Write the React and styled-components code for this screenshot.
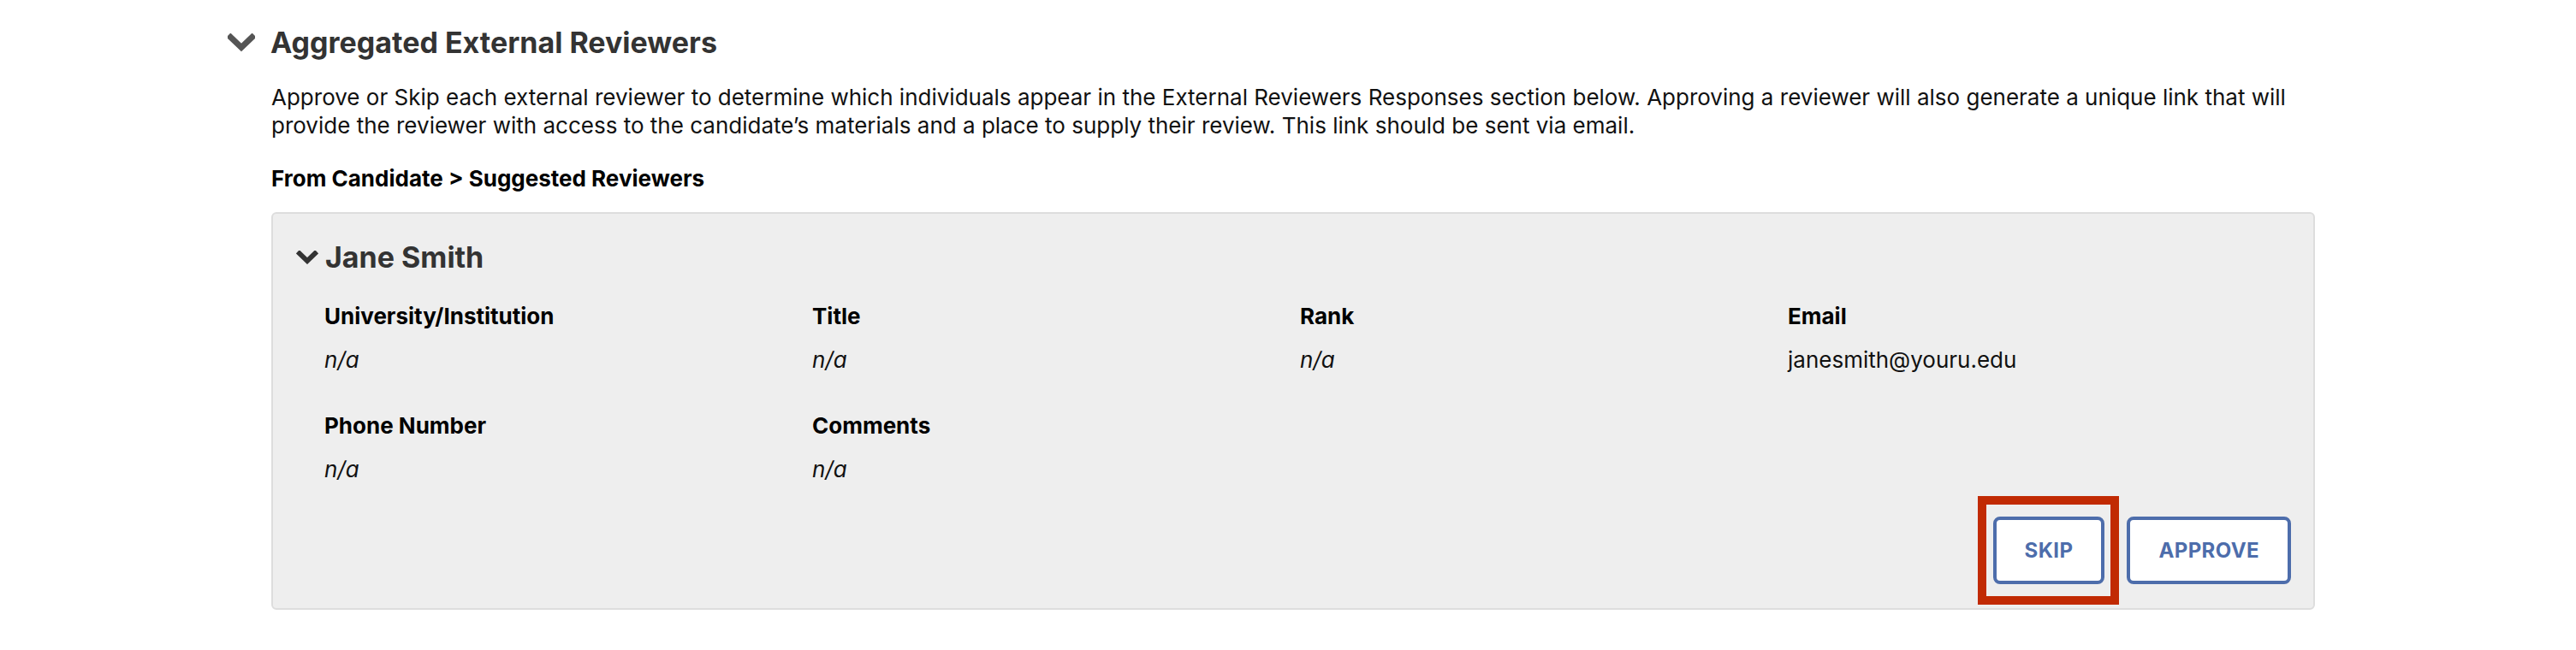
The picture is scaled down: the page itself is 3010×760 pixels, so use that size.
import React from "react";
import styled, { createGlobalStyle } from "styled-components";

const GlobalStyle = createGlobalStyle`
  body {
    margin: 0;
    background: #ffffff;
    font-family: Inter, "Liberation Sans", sans-serif;
    color: #111111;
  }
`;

const fields = [
  { label: "University/Institution", value: "n/a", empty: true },
  { label: "Title", value: "n/a", empty: true },
  { label: "Rank", value: "n/a", empty: true },
  { label: "Email", value: "janesmith@youru.edu" },
  { label: "Phone Number", value: "n/a", empty: true },
  { label: "Comments", value: "n/a", empty: true },
];

function Chevron({ size }) {
  const big = size === "big";
  return (
    <ChevronIcon
      width={big ? 32 : 26}
      height={big ? 22 : 16}
      viewBox="0 0 32 22"
      $big={big}
    >
      <path d="M3.5 4.5 L16 16.5 L28.5 4.5" />
    </ChevronIcon>
  );
}

export default function App() {
  return (
    <>
      <GlobalStyle />
      <Section>
        <SectionHeader>
          <Chevron size="big" />
          <SectionTitle>Aggregated External Reviewers</SectionTitle>
        </SectionHeader>

        <SectionBody>
          <Intro>
            Approve or Skip each external reviewer to determine which individuals
            appear in the External Reviewers Responses section below. Approving a
            reviewer will also generate a unique link that will provide the
            reviewer with access to the candidate’s materials and a place to
            supply their review. This link should be sent via email.
          </Intro>

          <GroupTitle>From Candidate &gt; Suggested Reviewers</GroupTitle>

          <ReviewerCard>
            <ReviewerHeader>
              <Chevron size="small" />
              <ReviewerName>Jane Smith</ReviewerName>
            </ReviewerHeader>

            <FieldGrid>
              {fields.map((f) => (
                <Field key={f.label}>
                  <FieldLabel>{f.label}</FieldLabel>
                  <FieldValue $empty={f.empty}>{f.value}</FieldValue>
                </Field>
              ))}
            </FieldGrid>

            <Actions>
              <Highlight>
                <ActionButton>Skip</ActionButton>
              </Highlight>
              <ActionButton>Approve</ActionButton>
            </Actions>
          </ReviewerCard>
        </SectionBody>
      </Section>
    </>
  );
}

const Section = styled.div`
  padding: 30px 0 0 266px;
  width: 2439px;
`;

const SectionHeader = styled.div`
  display: flex;
  align-items: center;
  gap: 18px;
  height: 40px;
`;

const ChevronIcon = styled.svg`
  flex: none;
  fill: none;
  stroke: ${(p) => (p.$big ? "#555555" : "#333333")};
  stroke-width: ${(p) => (p.$big ? 7 : 8)};
  stroke-linecap: square;
  stroke-linejoin: miter;
`;

const SectionTitle = styled.h2`
  margin: 0;
  font-size: 34px;
  line-height: 40px;
  font-weight: 700;
  color: #333333;
`;

const SectionBody = styled.div`
  padding-left: 51px;
  padding-top: 27px;
`;

const Intro = styled.p`
  margin: 0;
  font-size: 26px;
  line-height: 33px;
  color: #111111;
`;

const GroupTitle = styled.h3`
  margin: 30px 0 0;
  font-size: 26px;
  line-height: 32px;
  font-weight: 700;
  color: #000000;
`;

const ReviewerCard = styled.div`
  margin-top: 23px;
  background: #eeeeee;
  border: 2px solid #dddddd;
  border-radius: 6px;
  padding: 31px 26px 28px 27px;
`;

const ReviewerHeader = styled.div`
  display: flex;
  align-items: center;
  gap: 8px;
  height: 40px;
`;

const ReviewerName = styled.h4`
  margin: 0;
  font-size: 34px;
  line-height: 40px;
  font-weight: 700;
  color: #333333;
`;

const FieldGrid = styled.div`
  display: grid;
  grid-template-columns: repeat(4, 570px);
  row-gap: 47px;
  margin: 34px 0 0 33px;
`;

const Field = styled.div`
  display: flex;
  flex-direction: column;
  gap: 21px;
`;

const FieldLabel = styled.div`
  font-size: 26px;
  line-height: 30px;
  font-weight: 700;
  color: #000000;
`;

const FieldValue = styled.div`
  font-size: 26px;
  line-height: 30px;
  font-style: ${(p) => (p.$empty ? "italic" : "normal")};
  color: #111111;
`;

const Actions = styled.div`
  display: flex;
  justify-content: flex-end;
  gap: 26px;
  margin-top: 40px;
`;

const Highlight = styled.div`
  position: relative;
  display: flex;

  &::after {
    content: "";
    position: absolute;
    top: -24px;
    bottom: -24px;
    left: -18px;
    right: -17px;
    border: 10px solid #c12a03;
    pointer-events: none;
  }
`;

const ActionButton = styled.button`
  height: 79px;
  padding: 0 33px;
  background: #ffffff;
  border: 4px solid #4d6dab;
  border-radius: 8px;
  font-family: Inter, "Liberation Sans", sans-serif;
  font-size: 24px;
  font-weight: 700;
  letter-spacing: 0.4px;
  text-transform: uppercase;
  color: #4d6dab;
  cursor: pointer;
`;
